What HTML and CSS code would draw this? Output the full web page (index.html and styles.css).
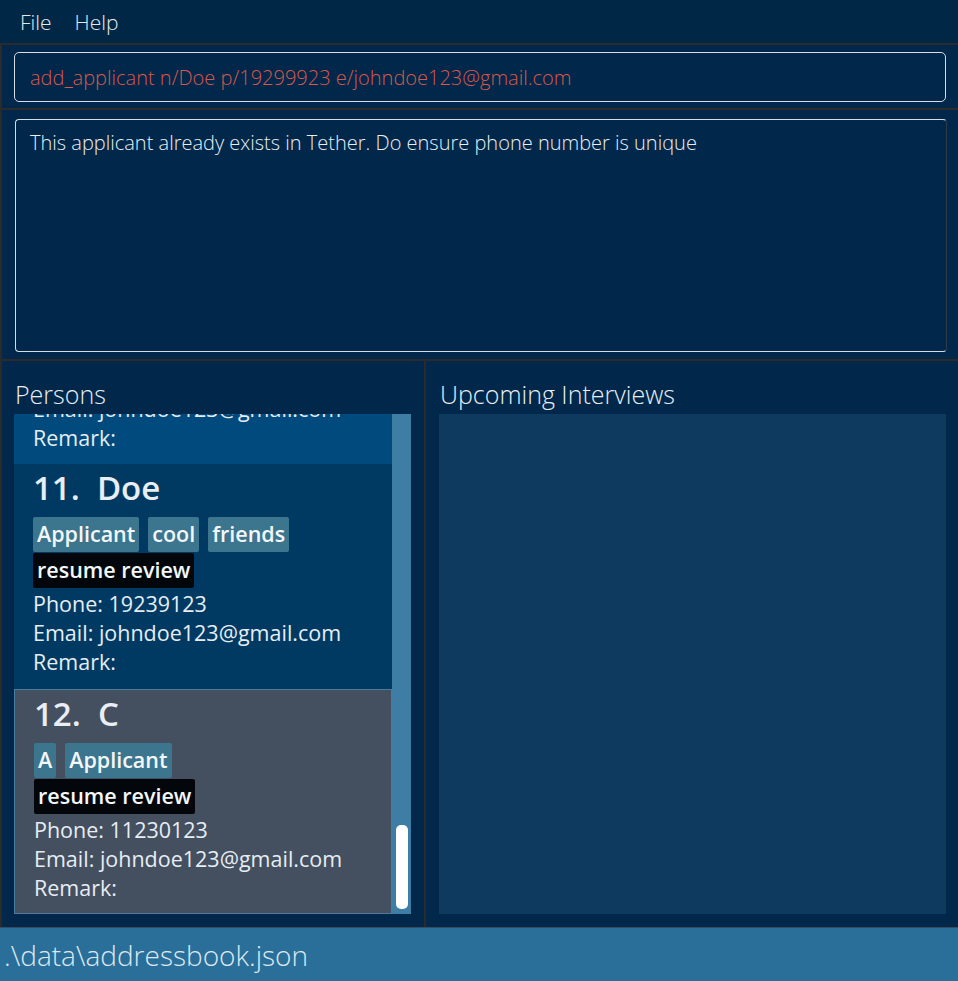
FILE: index.html
```html
<!DOCTYPE html>
<html>
<head>
<meta charset="utf-8">
<link rel="stylesheet" href="styles.css">
</head>
<body>
<div class="app">
  <div class="menubar">
    <span class="menu-item">File</span>
    <span class="menu-item">Help</span>
  </div>
  <div class="content">
    <div class="cmd-section">
      <div class="cmd-box">add_applicant n/Doe p/19299923 e/johndoe123@gmail.com</div>
    </div>
    <div class="result-section">
      <div class="result-box">This applicant already exists in Tether. Do ensure phone number is unique</div>
    </div>
    <div class="main">
      <div class="panel persons">
        <div class="panel-title">Persons</div>
        <div class="list">
          <div class="list-inner">
            <div class="card card-selected">
              <div class="card-spacer"></div>
              <div class="field">Email: johndoe123@gmail.com</div>
              <div class="field">Remark:</div>
            </div>
            <div class="card card-odd">
              <div class="name">11.&nbsp; Doe</div>
              <div class="tags"><span class="tag">Applicant</span><span class="tag">cool</span><span class="tag">friends</span></div>
              <div class="tags"><span class="tag tag-dark">resume review</span></div>
              <div class="field">Phone: 19239123</div>
              <div class="field">Email: johndoe123@gmail.com</div>
              <div class="field">Remark:</div>
            </div>
            <div class="card card-focus">
              <div class="name">12.&nbsp; C</div>
              <div class="tags"><span class="tag">A</span><span class="tag">Applicant</span></div>
              <div class="tags"><span class="tag tag-dark">resume review</span></div>
              <div class="field">Phone: 11230123</div>
              <div class="field">Email: johndoe123@gmail.com</div>
              <div class="field">Remark:</div>
            </div>
          </div>
          <div class="scrollbar"><div class="thumb"></div></div>
        </div>
      </div>
      <div class="panel interviews">
        <div class="panel-title">Upcoming Interviews</div>
        <div class="interview-box"></div>
      </div>
    </div>
  </div>
  <div class="statusbar">.\data\addressbook.json</div>
</div>
</body>
</html>
```
FILE: styles.css
```css
* { box-sizing: border-box; }
html, body { margin: 0; padding: 0; }
body {
  background: #002846;
  font-family: "Open Sans", "Noto Sans", sans-serif;
  color: #e6edf3;
  width: 958px;
  height: 981px;
  overflow: hidden;
}
.app { display: flex; flex-direction: column; height: 981px; }

.menubar {
  height: 43px;
  display: flex;
  align-items: center;
  gap: 23px;
  padding-left: 20px;
  font-size: 21px;
  font-weight: 300;
  color: #e4e9ee;
  background: #002846;
}

.content {
  flex: 1;
  display: flex;
  flex-direction: column;
  border-left: 2px solid #2b2b2b;
  background: #01284a;
}

.cmd-section {
  border-top: 2px solid #2b2b2b;
  padding: 7px 12px 6px 12px;
}
.cmd-box {
  height: 50px;
  border: 1.5px solid #d6dde4;
  border-radius: 5px;
  padding: 0 15px;
  display: flex;
  align-items: center;
  font-size: 20px;
  font-weight: 300;
  color: #d9574b;
  white-space: nowrap;
}

.result-section {
  border-top: 2px solid #2b2b2b;
  padding: 9px 11px 7px 13px;
}
.result-box {
  height: 233px;
  border: 1.5px solid #d6dde4;
  border-right-color: #2e3a46;
  border-radius: 4px;
  padding: 9px 14px;
  font-size: 20px;
  font-weight: 300;
  color: #e8eef4;
}

.main {
  flex: 1;
  display: flex;
  border-top: 2px solid #2b2b2b;
}
.panel {
  display: flex;
  flex-direction: column;
  padding-bottom: 13px;
}
.persons {
  width: 424px;
  padding-left: 12px;
  border-right: 2px solid #2b2b2b;
}
.interviews {
  flex: 1;
  padding-left: 13px;
  padding-right: 12px;
}
.panel-title {
  height: 53px;
  padding-top: 16px;
  padding-left: 1px;
  font-size: 25px;
  font-weight: 300;
  color: #e8eef4;
  line-height: 34px;
  white-space: nowrap;
}
.interview-box {
  flex: 1;
  background: #0d3a5e;
}

.list {
  flex: 1;
  display: flex;
  width: 397px;
  overflow: hidden;
}
.list-inner {
  flex: 1;
  display: flex;
  flex-direction: column;
  justify-content: flex-end;
  overflow: hidden;
}
.scrollbar {
  width: 19px;
  background: #3e7ea5;
  display: flex;
  flex-direction: column;
  justify-content: flex-end;
  padding: 0 3px 5px 4px;
}
.thumb {
  height: 84px;
  background: #ffffff;
  border-radius: 5px;
}

.card {
  height: 225px;
  flex-shrink: 0;
  padding: 0 0 0 19px;
}
.card-selected {
  background: #004a7d;
  height: 50px;
  display: flex;
  flex-direction: column;
  justify-content: flex-end;
  padding-bottom: 12px;
  overflow: hidden;
}
.card-spacer { flex: 1; }
.card-odd { background: #003a63; }
.card-focus {
  background: #444f60;
  border: 1px solid #4a7d9c;
}
.name {
  height: 53px;
  display: flex;
  align-items: center;
  font-size: 33px;
  font-weight: 600;
  color: #e8eef4;
  padding-bottom: 6px;
}
.tags {
  display: flex;
  flex-wrap: wrap;
  gap: 9px;
  margin-bottom: 1px;
}
.tag {
  height: 35px;
  display: flex;
  align-items: center;
  padding: 0 4px 2px 4px;
  background: #3b758e;
  border-radius: 2px;
  font-size: 21.5px;
  font-weight: 600;
  color: #f4f7fa;
}
.tag-dark { background: #03070b; }
.field {
  height: 29px;
  line-height: 29px;
  font-size: 21.5px;
  font-weight: 400;
  color: #e6edf3;
  white-space: nowrap;
  flex-shrink: 0;
}

.statusbar {
  height: 54px;
  background: #2a6f99;
  border-top: 1px solid #3b4b5c;
  padding-left: 4px;
  display: flex;
  align-items: center;
  font-size: 28px;
  font-weight: 300;
  color: #dde8f1;
}
```
